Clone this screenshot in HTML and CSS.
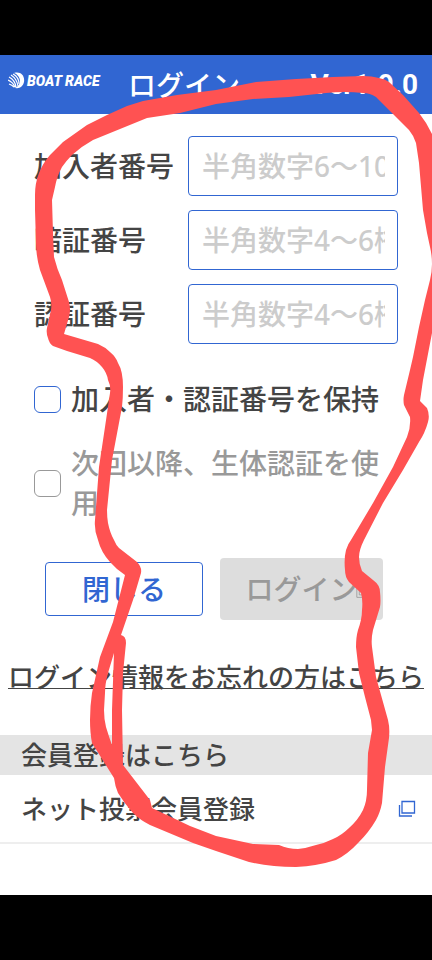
FILE: index.html
```html
<!DOCTYPE html>
<html lang="ja">
<head>
<meta charset="utf-8">
<meta name="viewport" content="width=device-width, initial-scale=1">
<title>ログイン</title>
<link rel="stylesheet" href="styles.css">
</head>
<body>
<div class="screen">
  <header class="header">
    <div class="brand">
      <svg class="brand-mark" viewBox="0 0 17 17" aria-hidden="true">
        <path d="M6 1C13-1 17 4 16 10C15 15 10 18 5 15C8 17 12 13 12 9C12 5 9 2 6 1Z" fill="#fff"/>
        <path d="M5 2Q11 5 11 12M3 3Q9 7 10 14M1 5Q7 8 8 15M0 8Q5 10 7 15M1 12Q4 13 6 15" fill="none" stroke="#fff" stroke-width="1.2"/>
      </svg>
      <span class="brand-name">BOAT RACE</span>
    </div>
    <h1 class="title">ログイン</h1>
    <span class="version">Ver1.9.0</span>
  </header>
  <main class="content">
    <form class="login">
      <div class="field"><label for="member">加入者番号</label><input id="member" type="text" placeholder="半角数字6〜10桁"></div>
      <div class="field"><label for="pin">暗証番号</label><input id="pin" type="text" placeholder="半角数字4〜6桁"></div>
      <div class="field"><label for="auth">認証番号</label><input id="auth" type="text" placeholder="半角数字4〜6桁"></div>
      <div class="checks">
        <label class="check"><input type="checkbox"><span>加入者・認証番号を保持</span></label>
        <label class="check check-off"><input type="checkbox" disabled><span>次回以降、生体認証を使用</span></label>
      </div>
      <div class="actions">
        <button class="btn btn-close" type="button">閉じる</button>
        <button class="btn btn-login" type="submit" disabled>ログイン<svg class="btn-icon" viewBox="0 0 17 17" aria-hidden="true"><path d="M4 1H16V12H4ZM1 4V15H13" fill="none" stroke="currentColor"/></svg></button>
      </div>
    </form>
    <a class="forgot" href="#">ログイン情報をお忘れの方はこちら</a>
    <h2 class="section">会員登録はこちら</h2>
    <a class="row" href="#">ネット投票会員登録<svg class="row-icon" viewBox="0 0 18 18" aria-hidden="true"><path d="M4 1.500H16.500V13H4ZM1.500 5V16H14" fill="none" stroke="currentColor" stroke-width="1.300"/></svg></a>
  </main>
  <svg class="marker" viewBox="0 0 432 960" aria-hidden="true">
    <path fill="#ff5252" fill-rule="evenodd" d="M35 210L35 195Q35 183 39 173Q43 163 50 155L63 142L87 125L107 115L127 106L143 101L177 95L216 90L256 82L296 79L333 77L363 76Q372 76 379 78Q385 79 389 82L403 95L419 113Q427 123 432 134L440 150V320L432 333L423 380L420 401L427 408Q430 415 428 422Q425 433 419 442L403 470L383 503L364 540Q359 550 359 557Q359 564 362 571L373 580Q380 585 380 592Q381 601 380 607L373 630Q371 639 372 647L376 677L388 720Q390 728 389 738L385 767L382 803Q380 813 376 820Q369 832 359 842Q348 854 336 860Q317 866 296 867Q270 867 249 862L216 851L193 843L150 825Q140 820 133 813Q124 803 118 793Q115 786 114 778L92 743Q90 733 90 720Q90 706 92 693L100 657L113 622L125 575Q116 569 110 562Q101 552 98 540Q94 530 95 520L99 467L105 427L110 393Q111 386 108 380Q107 373 102 367Q97 361 90 358L67 351L53 346Q49 343 48 338Q46 333 47 328L51 310Q52 303 50 297L40 270Q36 256 36 243ZM52 200L53 233L54 257Q57 269 62 280L69 302Q71 310 69 317L64 334L98 344Q105 347 110 352Q116 357 118 363Q123 371 123 387Q123 398 122 407L112 460L107 510Q107 517 108 523Q110 533 114 540Q116 545 119 548L137 562Q142 567 141 573L133 600L121 635Q126 636 126 643L123 673L122 710L123 765L150 800L152 808L190 826L216 836L253 844L279 845Q288 849 298 849Q307 848 316 845Q325 843 333 839Q342 835 349 828Q358 820 363 810Q367 801 367 790L368 753L372 730L371 720L365 697L359 673L356 647Q356 637 358 630Q362 619 362 610Q363 600 361 593L349 582Q345 577 345 570Q343 550 351 540L373 503L393 467L407 437Q411 427 410 417L404 405Q403 400 404 395L410 370L413 357L419 327L425 300L430 280Q432 272 432 264Q432 255 430 247L427 233L423 210L419 163L416 143Q414 136 409 130L389 110L376 97Q370 93 363 93Q345 91 326 93L289 97L253 99L216 104L180 113L147 118L93 140Q82 146 72 155Q67 160 62 167Q57 176 55 187ZM114 653L108 673Q105 684 105 693L104 710Q104 719 106 727Q109 737 112 745L112 710Z"/>
  </svg>
</div>
</body>
</html>
```

FILE: styles.css
```css
* { box-sizing: border-box; }
body {
  margin: 0;
  background: #000;
  color: #444;
  font: 500 28px/40px "Noto Sans", "Noto Sans CJK JP", sans-serif;
}
.screen {
  position: relative;
  min-height: 100vh;
  padding: 55px 0 65px;
  display: flex;
  flex-direction: column;
  overflow: hidden;
}
.header {
  height: 59px;
  padding: 0 14px 0 8px;
  display: flex;
  align-items: center;
  background: #3166d2;
  color: #fff;
}
.brand { display: flex; align-items: center; gap: 2px; width: 120px; padding-bottom: 8px; }
.brand-mark { width: 17px; height: 17px; }
.brand-name {
  font: italic 900 14px/20px Roboto, sans-serif;
  white-space: nowrap;
}
.title { margin: 0; font-size: 28px; font-weight: 500; }
.version { margin-left: auto; font: bold 28px/40px Roboto, sans-serif; }
.content { flex: 1; background: #fff; padding-top: 22px; }
.login { padding: 0 34px; }
.field {
  display: grid;
  grid-template-columns: 154px 1fr;
  align-items: center;
  margin-bottom: 14px;
}
.field input {
  width: 100%;
  height: 60px;
  padding: 0 12px 0 13px;
  border: 1px solid #3166d2;
  border-radius: 4px;
  background: #fff;
  font: inherit;
}
.field input::placeholder { color: #ccc; opacity: 1; }
.checks { display: grid; gap: 24px; padding-top: 21px; }
.check { display: flex; align-items: center; gap: 10px; }
.check input {
  appearance: none;
  flex: none;
  width: 27px;
  height: 27px;
  margin: 0;
  border: 1px solid #3166d2;
  border-radius: 6px;
  background: #fff;
}
.check-off { color: #999; }
.check-off input { border-color: #999; }
.actions {
  display: flex;
  align-items: center;
  gap: 17px;
  padding: 35px 15px 0 11px;
}
.btn {
  position: relative;
  height: 54px;
  padding: 0;
  border-radius: 4px;
  font: inherit;
  white-space: nowrap;
}
.btn-close { flex: 157; border: 1px solid #3166d2; background: #fff; color: #3166d2; }
.btn-login { flex: 164; height: 62px; border: 0; background: #ddd; color: #999; }
.btn-icon { position: absolute; right: 13px; top: 27px; width: 14px; height: 14px; }
.forgot {
  display: block;
  margin: 37px 0 38px;
  color: #444;
  font-size: 26px;
  text-align: center;
  white-space: nowrap;
  text-decoration: underline;
  text-decoration-thickness: 1px;
}
.section {
  margin: 0;
  padding: 0 21px;
  background: #e4e4e4;
  font-size: 26px;
  font-weight: 500;
}
.row {
  display: flex;
  align-items: center;
  justify-content: space-between;
  height: 69px;
  padding: 0 16px 0 21px;
  border-bottom: 2px solid #eee;
  color: #444;
  font-size: 26px;
  text-decoration: none;
}
.row-icon { width: 18px; height: 18px; color: #3166d2; }
.marker {
  position: absolute;
  top: 0;
  left: 0;
  width: 100%;
  pointer-events: none;
}
```
